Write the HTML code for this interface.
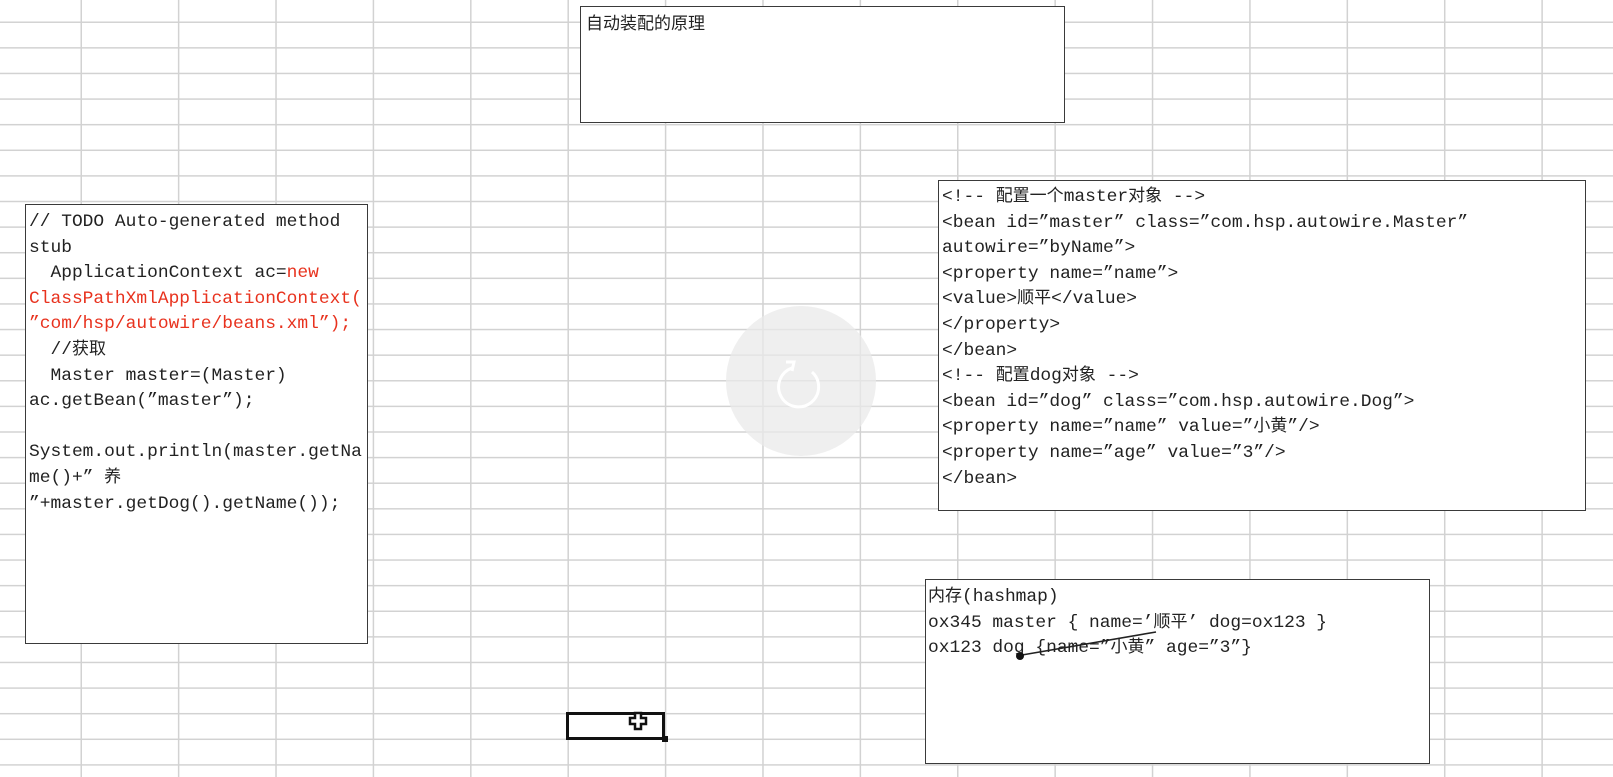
<!DOCTYPE html>
<html><head><meta charset="utf-8">
<style>
html,body{margin:0;padding:0;}
body{width:1613px;height:777px;position:relative;overflow:hidden;background:#fff;
background-image:linear-gradient(to right,#d2d2d2 0,#d2d2d2 1.6px,transparent 1.6px),linear-gradient(to bottom,#d2d2d2 0,#d2d2d2 1.6px,transparent 1.6px);
background-size:97.4px 25.62px;background-position:80.5px 21.5px;}
.box{position:absolute;background:#fff;border:1.5px solid #3a3a3a;box-sizing:border-box;}
.t{position:absolute;font-family:"Liberation Mono","Noto Sans CJK SC",monospace;font-size:17.9px;color:#222;}
.t div{height:25.6px;line-height:25.6px;white-space:pre;overflow:visible;}
.r{color:#e8321e;}
.cj{font-family:"Noto Sans CJK SC",sans-serif;font-size:17px;line-height:1;}
</style></head><body>

<div class="box" style="left:580px;top:6px;width:485px;height:117px;"></div>
<div class="t" style="left:586px;top:9px;"><div class="cj" style="line-height:25.6px">自动装配的原理</div></div>

<div class="box" style="left:25px;top:204px;width:343px;height:440px;"></div>
<div class="t" style="left:29px;top:210px;">
<div>// TODO Auto-generated method</div>
<div>stub</div>
<div>  ApplicationContext ac=<span class="r">new</span></div>
<div><span class="r">ClassPathXmlApplicationContext(</span></div>
<div><span class="r">”com/hsp/autowire/beans.xml”);</span></div>
<div>  //<span class="cj">获取</span></div>
<div>  Master master=(Master)</div>
<div>ac.getBean(”master”);</div>
<div> </div>
<div>System.out.println(master.getNa</div>
<div>me()+” <span class="cj">养</span></div>
<div>”+master.getDog().getName());</div>
</div>

<div class="box" style="left:938px;top:180px;width:648px;height:331px;"></div>
<div class="t" style="left:942px;top:185px;">
<div>&lt;!-- <span class="cj">配置一个</span>master<span class="cj">对象</span> --&gt;</div>
<div>&lt;bean id=”master” class=”com.hsp.autowire.Master”</div>
<div>autowire=”byName”&gt;</div>
<div>&lt;property name=”name”&gt;</div>
<div>&lt;value&gt;<span class="cj">顺平</span>&lt;/value&gt;</div>
<div>&lt;/property&gt;</div>
<div>&lt;/bean&gt;</div>
<div>&lt;!-- <span class="cj">配置</span>dog<span class="cj">对象</span> --&gt;</div>
<div>&lt;bean id=”dog” class=”com.hsp.autowire.Dog”&gt;</div>
<div>&lt;property name=”name” value=”<span class="cj">小黄</span>”/&gt;</div>
<div>&lt;property name=”age” value=”3”/&gt;</div>
<div>&lt;/bean&gt;</div>
</div>

<div class="box" style="left:925px;top:579px;width:505px;height:185px;"></div>
<div class="t" style="left:928px;top:585px;">
<div><span class="cj">内存</span>(hashmap)</div>
<div>ox345 master { name=’<span class="cj">顺平</span>’ dog=ox123 }</div>
<div>ox123 dog {name=”<span class="cj">小黄</span>” age=”3”}</div>
</div>
<svg style="position:absolute;left:0;top:0" width="1613" height="777">
<line x1="1156" y1="632" x2="1022" y2="655" stroke="#222" stroke-width="1.6"/>
<circle cx="1020" cy="656" r="4" fill="#111"/>
<circle cx="801" cy="381" r="75" fill="#e9e9e9" opacity="0.75"/>
<path d="M792 368 a20 20 0 1 0 20 4" fill="none" stroke="#fff" stroke-width="3"/>
<path d="M786 362 l8 0 l-2 9" fill="none" stroke="#fff" stroke-width="3"/>
</svg>

<div style="position:absolute;left:566px;top:712px;width:99px;height:28px;border:3px solid #111;box-sizing:border-box;"></div>
<div style="position:absolute;left:662px;top:736px;width:6px;height:6px;background:#111;"></div>
<svg style="position:absolute;left:628px;top:711px" width="22" height="22"><path d="M7 2h6v5h5v6h-5v5h-6v-5h-5v-6h5z" fill="#fff" stroke="#111" stroke-width="2.5"/></svg>
</body></html>
